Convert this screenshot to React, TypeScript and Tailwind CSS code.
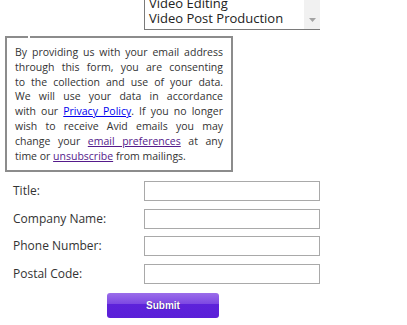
const noticeLines: React.ReactNode[] = [
  "By providing us with your email address",
  "through this form, you are consenting",
  "to the collection and use of your data.",
  "We will use your data in accordance",
  <>
    with our{" "}
    <a href="#" className="text-[#0000ee] underline">
      Privacy Policy
    </a>
    . If you no longer
  </>,
  "wish to receive Avid emails you may",
  <>
    change your{" "}
    <a href="#" className="text-[#551a8b] underline">
      email preferences
    </a>{" "}
    at any
  </>,
];

const fields = ["Title:", "Company Name:", "Phone Number:", "Postal Code:"];

export default function App() {
  return (
    <div className="w-[407px] h-[325px] bg-white overflow-hidden font-['Open_Sans',sans-serif]">
      {/* cut-off multi select */}
      <div className="pl-[144px]">
        <div className="w-[176px] h-[30px] flex border-l border-b border-[#7a7a7a] overflow-hidden">
          <div className="flex-1 flex flex-col justify-end pl-[4px] pb-[3px] text-[13px] leading-[15px] text-[#222]">
            <div>Video Editing</div>
            <div>Video Post Production</div>
          </div>
          <div className="w-[16px] bg-[#f1f1f1] flex items-end justify-center pb-[7px]">
            <svg width="7" height="4" viewBox="0 0 7 4">
              <path d="M0 0h7L3.5 4z" fill="#a3a3a3" />
            </svg>
          </div>
        </div>
      </div>

      {/* consent notice */}
      <fieldset className="ml-[5px] mt-[6px] w-[228px] border-2 border-[#8c8c8c] px-[8px] pt-[7px] pb-[7px] text-[10.5px] leading-[14.8px] text-[#333]">
        <legend className="ml-[13px] w-[2px] h-0 p-0"></legend>
        {noticeLines.map((line, i) => (
          <div key={i} className="text-justify [text-align-last:justify] whitespace-nowrap">
            {line}
          </div>
        ))}
        <div>
          time or{" "}
          <a href="#" className="text-[#551a8b] underline">
            unsubscribe
          </a>{" "}
          from mailings.
        </div>
      </fieldset>

      {/* fields */}
      <div className="mt-[9px] flex flex-col gap-[7.4px]">
        {fields.map((f) => (
          <div key={f} className="flex items-center">
            <label className="w-[144px] pl-[13px] text-[12px] text-[#333]">{f}</label>
            <input type="text" className="w-[176px] h-[20px] border border-[#a9a9a9] bg-white" />
          </div>
        ))}
      </div>

      <div className="mt-[7px] pl-[107px]">
        <button className="w-[112px] h-[25px] rounded-[3px] bg-[linear-gradient(#9b6eea,#7c46e2_45%,#5d22da_46%,#5b20d8)] text-white text-[10px] font-bold font-['Liberation_Sans',sans-serif] [text-shadow:0_0_1px_rgba(0,0,0,0.4)]">
          Submit
        </button>
      </div>
    </div>
  );
}
